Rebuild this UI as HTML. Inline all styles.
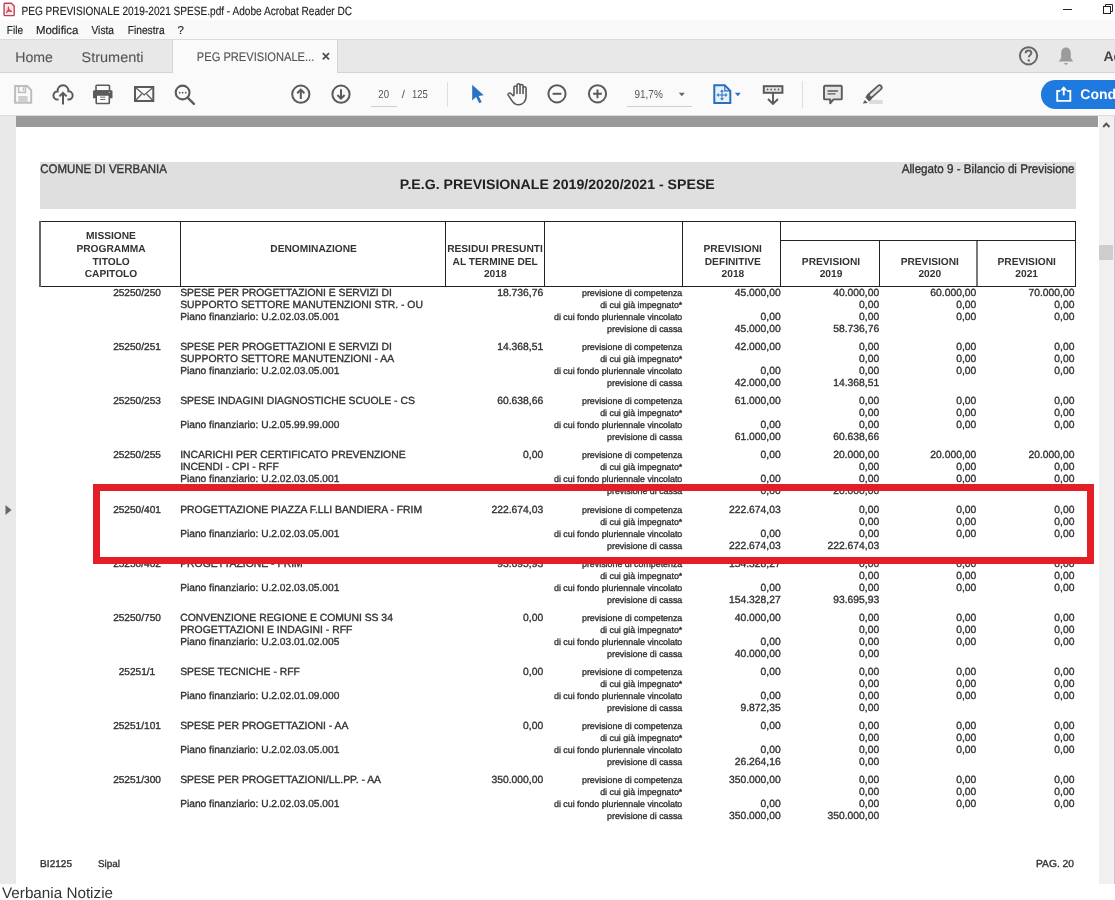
<!DOCTYPE html>
<html><head><meta charset="utf-8"><title>PEG</title>
<style>
html,body{margin:0;padding:0;}
body{width:1115px;height:900px;overflow:hidden;position:relative;background:#fff;font-family:"Liberation Sans",sans-serif;}
text{white-space:pre;}
svg.txt{will-change:transform;}
.r{position:absolute;}
</style></head><body>
<div class="r" style="left:0px;top:0px;width:1115px;height:20px;background:#ffffff;"></div>
<div class="r" style="left:0px;top:20px;width:1115px;height:19px;background:#f9f9f9;"></div>
<div class="r" style="left:0px;top:39px;width:1115px;height:1px;background:#dcdcdc;"></div>
<div class="r" style="left:0px;top:40px;width:1115px;height:32.5px;background:#e8e8e8;"></div>
<div class="r" style="left:0px;top:72px;width:1115px;height:1px;background:#d4d4d4;"></div>
<div class="r" style="left:171.5px;top:39.5px;width:166.5px;height:33.5px;background:#fafafa;border-left:1px solid #d6d6d6;border-right:1px solid #d6d6d6;box-sizing:border-box;"></div>
<div class="r" style="left:0px;top:73px;width:1115px;height:42.5px;background:#fafafa;"></div>
<div class="r" style="left:0px;top:115px;width:1115px;height:1px;background:#dcdcdc;"></div>
<svg class="r" style="left:0px;top:0px" width="20" height="20" viewBox="0 0 20 20"><path d="M4.9 3.2h6.4l2.9 2.9v8.7a0.8 0.8 0 0 1-0.8 0.8H4.9a0.8 0.8 0 0 1-0.8-0.8V4a0.8 0.8 0 0 1 0.8-0.8z" fill="#fde8e8" stroke="#b8445a" stroke-width="1.4"/><path d="M8.3 6.6c0.6 2.4-0.4 4.8-1.9 6.6M6.5 11.4c1.9-0.4 3.9-0.5 5.6 0.2M8.3 8.5c0.8 1.3 1.8 2.4 3.4 3" fill="none" stroke="#dd3c4c" stroke-width="1.1"/></svg>
<div class="r" style="left:1063px;top:9px;width:9px;height:1px;background:#222;"></div>
<svg class="r" style="left:1103px;top:4px" width="11" height="11" viewBox="0 0 11 11"><rect x="0.5" y="2.5" width="7" height="7" fill="none" stroke="#222" stroke-width="1"/><path d="M2.5 2.5V0.5h7v7h-2" fill="none" stroke="#222" stroke-width="1"/></svg>
<svg class="r" style="left:321px;top:52px" width="10" height="9" viewBox="0 0 10 9"><path d="M1.8 1.2L8 7.4M8 1.2L1.8 7.4" stroke="#4a4a4a" stroke-width="1.7"/></svg>
<svg class="r" style="left:1017px;top:45px" width="23" height="22" viewBox="0 0 23 22"><circle cx="11.5" cy="10.8" r="8.6" fill="none" stroke="#666" stroke-width="2"/><path d="M8.6 8.3c0-1.8 1.3-2.8 2.9-2.8s2.9 1 2.9 2.6c0 1.9-2.6 2.1-2.6 4.2" fill="none" stroke="#666" stroke-width="1.9"/><circle cx="11.8" cy="15.4" r="1.2" fill="#666"/></svg>
<svg class="r" style="left:1057px;top:46px" width="18" height="20" viewBox="0 0 18 20"><path d="M9 1.5c-3.3 0-4.8 2.6-4.8 5.8v4.7L1.8 15.5h14.4L13.8 12V7.3c0-3.2-1.5-5.8-4.8-5.8z" fill="#9b9b9b"/><path d="M7.2 17a1.8 1.8 0 0 0 3.6 0z" fill="#9b9b9b"/></svg>
<svg class="r" style="left:13px;top:84px" width="21" height="21" viewBox="0 0 21 21"><path d="M2.1 2.1h12l4.1 4.1v12.6H2.1z" fill="none" stroke="#bdbdbd" stroke-width="2"/><rect x="5.6" y="2.1" width="6.8" height="6.3" fill="none" stroke="#bdbdbd" stroke-width="1.6"/><rect x="9.6" y="3.5" width="1.4" height="3" fill="#bdbdbd"/><rect x="5.2" y="12" width="9.4" height="6.3" fill="#cfcfcf"/></svg>
<svg class="r" style="left:52px;top:84px" width="23" height="22" viewBox="0 0 23 22"><path d="M6.6 15.6H5.5A4.1 4.1 0 0 1 5.6 7.4A5.43 5.43 0 1 1 16.4 7.3A4.15 4.15 0 0 1 16.6 15.6H15.4" fill="none" stroke="#5a5a5a" stroke-width="2"/><path d="M11 20.5V8.8M7.4 12.4L11 8.8 14.6 12.4" fill="none" stroke="#5a5a5a" stroke-width="2"/></svg>
<svg class="r" style="left:92px;top:84px" width="22" height="21" viewBox="0 0 22 21"><rect x="4" y="1.2" width="13.5" height="5.8" rx="0.8" fill="none" stroke="#5a5a5a" stroke-width="1.6"/><path d="M2.2 6.2h17.1a1.2 1.2 0 0 1 1.2 1.2v6.9h-19.5V7.4a1.2 1.2 0 0 1 1.2-1.2z" fill="#5a5a5a"/><rect x="4.2" y="10.9" width="13.1" height="8.6" rx="0.8" fill="#fff" stroke="#5a5a5a" stroke-width="1.6"/><path d="M8.2 13.2h5.2M8.2 15.5h5.2" stroke="#5a5a5a" stroke-width="0.9"/><circle cx="17.3" cy="8.4" r="0.6" fill="#ccc"/></svg>
<svg class="r" style="left:133px;top:85px" width="22" height="18" viewBox="0 0 22 18"><rect x="2" y="2" width="18.3" height="14" fill="none" stroke="#5a5a5a" stroke-width="2"/><path d="M2.5 2.5l8.7 7.5 8.7-7.5M2.5 15.5l6.2-6.5M19.8 15.5l-6.2-6.5" fill="none" stroke="#5a5a5a" stroke-width="1.2"/></svg>
<svg class="r" style="left:173px;top:83px" width="24" height="24" viewBox="0 0 24 24"><circle cx="9.6" cy="9.5" r="6.9" fill="none" stroke="#5a5a5a" stroke-width="2.1"/><path d="M14.6 14.6l6.3 6.3" stroke="#5a5a5a" stroke-width="2.3" stroke-linecap="round"/><circle cx="6.6" cy="9.7" r="0.9" fill="#5a5a5a"/><circle cx="9.6" cy="9.7" r="0.9" fill="#5a5a5a"/><circle cx="12.7" cy="9.7" r="0.9" fill="#5a5a5a"/></svg>
<svg class="r" style="left:290px;top:83px" width="22" height="22" viewBox="0 0 22 22"><circle cx="10.8" cy="11.2" r="8.6" fill="none" stroke="#5a5a5a" stroke-width="2"/><path d="M10.8 16V6.8M7.2 10.2l3.6-3.6 3.6 3.6" fill="none" stroke="#5a5a5a" stroke-width="2"/></svg>
<svg class="r" style="left:330px;top:83px" width="22" height="22" viewBox="0 0 22 22"><circle cx="11" cy="11.2" r="8.6" fill="none" stroke="#5a5a5a" stroke-width="2"/><path d="M11 6.2v9.2M7.4 12l3.6 3.6 3.6-3.6" fill="none" stroke="#5a5a5a" stroke-width="2"/></svg>
<div class="r" style="left:370.5px;top:106px;width:26px;height:1px;background:#cfcfcf;"></div>
<div class="r" style="left:446.5px;top:81.5px;width:1px;height:25.5px;background:#dedede;"></div>
<svg class="r" style="left:470px;top:83px" width="16" height="22" viewBox="0 0 16 22"><path d="M2.2 1.8v15.8l3.9-3.6 3.2 6.3 2.4-1.2-3.1-6.2 5.1-0.6z" fill="#2b72c3"/></svg>
<svg class="r" style="left:505px;top:82px" width="24" height="25" viewBox="0 0 24 25"><g transform="translate(1.2 0) scale(1.08 1)"><path d="M7.2 13.5V5.3a1.4 1.4 0 0 1 2.8 0V12M10 12V3.2a1.4 1.4 0 0 1 2.8 0V12M12.8 12V3.8a1.4 1.4 0 0 1 2.8 0V12M15.6 12V6.2a1.4 1.4 0 0 1 2.8 0v8.3c0 4.6-2.8 8.3-6.9 8.3-3 0-4.7-1.7-6.4-4.5l-3.2-5.2a1.5 1.5 0 0 1 2.4-1.7l2.7 2.8" fill="none" stroke="#5a5a5a" stroke-width="1.5" stroke-linejoin="round"/></g></svg>
<svg class="r" style="left:546px;top:83px" width="22" height="22" viewBox="0 0 22 22"><circle cx="11" cy="10.8" r="8.6" fill="none" stroke="#5a5a5a" stroke-width="2"/><path d="M6.6 10.8h8.8" stroke="#5a5a5a" stroke-width="2"/></svg>
<svg class="r" style="left:586px;top:83px" width="22" height="22" viewBox="0 0 22 22"><circle cx="11.5" cy="10.8" r="8.6" fill="none" stroke="#5a5a5a" stroke-width="2"/><path d="M7.1 10.8h8.8M11.5 6.4v8.8" stroke="#5a5a5a" stroke-width="2"/></svg>
<svg class="r" style="left:678px;top:92px" width="8" height="5" viewBox="0 0 8 5"><path d="M0.8 0.8h6l-3 3.5z" fill="#666"/></svg>
<div class="r" style="left:626.5px;top:105.5px;width:65.5px;height:1px;background:#cfcfcf;"></div>
<svg class="r" style="left:712px;top:83px" width="21" height="22" viewBox="0 0 21 22"><path d="M2.3 2.3h10.5l5.5 5.5v12.2H2.3z" fill="#e4f1fd" stroke="#2b6fb8" stroke-width="2"/><path d="M12.8 2.3v5.5h5.5" fill="none" stroke="#2b6fb8" stroke-width="1.2"/><path d="M10 6.5l-2 2.2h4zM10 17.5l-2-2.2h4zM4.5 12l2.2-2v4zM15.5 12l-2.2-2v4z" fill="#2b6fb8"/><path d="M10 8.5v7M6.5 12h7" stroke="#2b6fb8" stroke-width="1"/></svg>
<svg class="r" style="left:734px;top:92px" width="8" height="5" viewBox="0 0 8 5"><path d="M0.8 0.8h6l-3 3.5z" fill="#2b72c3"/></svg>
<svg class="r" style="left:762px;top:84px" width="22" height="22" viewBox="0 0 22 22"><rect x="1.8" y="2.2" width="18.6" height="6.6" fill="#e6e6e6" stroke="#5a5a5a" stroke-width="2"/><circle cx="5.6" cy="5.5" r="0.9" fill="#5a5a5a"/><circle cx="9.2" cy="5.5" r="0.9" fill="#5a5a5a"/><circle cx="12.9" cy="5.5" r="0.9" fill="#5a5a5a"/><circle cx="16.5" cy="5.5" r="0.9" fill="#5a5a5a"/><path d="M11 9v11M6 15l5 5 5-5" fill="none" stroke="#5a5a5a" stroke-width="1.9"/></svg>
<div class="r" style="left:802px;top:81px;width:1px;height:26.5px;background:#dedede;"></div>
<svg class="r" style="left:822px;top:84px" width="22" height="22" viewBox="0 0 22 22"><path d="M3 1.8h15.8a1 1 0 0 1 1 1v11.6a1 1 0 0 1-1 1H11.5l-3.3 3.9v-3.9H3a1 1 0 0 1-1-1V2.8a1 1 0 0 1 1-1z" fill="#e4e4e4" stroke="#5a5a5a" stroke-width="1.9" stroke-linejoin="round"/><path d="M5.5 7h10.5M5.5 9.8h8" stroke="#5a5a5a" stroke-width="1.3"/></svg>
<svg class="r" style="left:860px;top:83px" width="26" height="24" viewBox="0 0 26 24"><rect x="9.3" y="17" width="13.4" height="4" fill="#dcdcdc"/><path d="M9.6 13.4L19.5 4.5" stroke="#5a5a5a" stroke-width="6.2" stroke-linecap="round"/><path d="M11.3 12L19.4 4.6" stroke="#e2e2e2" stroke-width="2.8" stroke-linecap="round"/><path d="M7.2 16.4L10.2 13.6" stroke="#5a5a5a" stroke-width="5.6"/><path d="M2.8 20.5L4.9 17.1 7.7 19.9z" fill="#5a5a5a"/></svg>
<div class="r" style="left:1041px;top:80px;width:120px;height:28.7px;background:#1f7ae0;border-radius:14.35px;"></div>
<svg class="r" style="left:1055px;top:85px" width="18" height="18" viewBox="0 0 18 18"><path d="M5.2 6H2.2V15.9H15.3V6H12.2" fill="none" stroke="#fff" stroke-width="1.9"/><path d="M8.75 5V10.4" stroke="#fff" stroke-width="1.9"/><path d="M5.1 5.6L8.75 1.2 12.4 5.6z" fill="#fff"/></svg>
<div class="r" style="left:0px;top:116px;width:16px;height:767.5px;background:#e9e9e9;"></div>
<div class="r" style="left:16px;top:116px;width:1083px;height:767.5px;background:#ffffff;"></div>
<div class="r" style="left:16px;top:116px;width:1082px;height:11px;background:#9a9a9a;"></div>
<svg class="r" style="left:4px;top:504px" width="9" height="12" viewBox="0 0 9 12"><path d="M1.5 1v10l6-5z" fill="#666"/></svg>
<div class="r" style="left:1099px;top:116px;width:15px;height:767.5px;background:#f0f0f0;"></div>
<div class="r" style="left:1114px;top:116px;width:1px;height:767.5px;background:#c9c9c9;"></div>
<div class="r" style="left:1099px;top:245px;width:14px;height:15px;background:#cdcdcd;"></div>
<svg class="r" style="left:1100px;top:119px" width="13" height="11" viewBox="0 0 13 11"><path d="M3.2 8L6.3 4.6 9.4 8" fill="none" stroke="#505050" stroke-width="1.9"/></svg>
<div class="r" style="left:39.5px;top:162px;width:1036.5px;height:46.5px;background:#dfdfdf;"></div>
<div class="r" style="left:39px;top:221px;width:1037px;height:1px;background:#222;"></div>
<div class="r" style="left:39px;top:286px;width:1037px;height:1px;background:#222;"></div>
<div class="r" style="left:39px;top:221px;width:2px;height:66px;background:#666;"></div>
<div class="r" style="left:180px;top:221px;width:1px;height:66px;background:#222;"></div>
<div class="r" style="left:445px;top:221px;width:1px;height:66px;background:#222;"></div>
<div class="r" style="left:544px;top:221px;width:1px;height:66px;background:#222;"></div>
<div class="r" style="left:682px;top:221px;width:1px;height:66px;background:#222;"></div>
<div class="r" style="left:780px;top:221px;width:1px;height:66px;background:#222;"></div>
<div class="r" style="left:1075px;top:221px;width:1px;height:66px;background:#222;"></div>
<div class="r" style="left:879px;top:240px;width:1px;height:46px;background:#222;"></div>
<div class="r" style="left:976px;top:240px;width:2px;height:46px;background:#7a7a7a;"></div>
<div class="r" style="left:780px;top:240px;width:295px;height:1px;background:#222;"></div>
<svg class="r txt" style="left:0;top:0" width="1115" height="900" font-family="Liberation Sans" text-rendering="geometricPrecision"><text x="21.50" y="15.20" font-size="12" fill="#1e1e1e" textLength="330.5" lengthAdjust="spacingAndGlyphs" stroke="#1e1e1e" stroke-width="0.15">PEG PREVISIONALE 2019-2021 SPESE.pdf - Adobe Acrobat Reader DC</text><text x="6.80" y="34.00" font-size="11.5" fill="#222" textLength="16.2" lengthAdjust="spacingAndGlyphs" stroke="#222" stroke-width="0.15">File</text><text x="35.90" y="34.00" font-size="11.5" fill="#222" textLength="42.5" lengthAdjust="spacingAndGlyphs" stroke="#222" stroke-width="0.15">Modifica</text><text x="91.50" y="34.00" font-size="11.5" fill="#222" textLength="22.5" lengthAdjust="spacingAndGlyphs" stroke="#222" stroke-width="0.15">Vista</text><text x="127.70" y="34.00" font-size="11.5" fill="#222" textLength="37" lengthAdjust="spacingAndGlyphs" stroke="#222" stroke-width="0.15">Finestra</text><text x="177.60" y="34.00" font-size="11.5" fill="#222" stroke="#222" stroke-width="0.15">?</text><text x="15.20" y="61.70" font-size="14.1" fill="#555" textLength="37.7" lengthAdjust="spacingAndGlyphs" stroke="#555" stroke-width="0.1">Home</text><text x="81.60" y="61.70" font-size="14.1" fill="#555" textLength="61.9" lengthAdjust="spacingAndGlyphs" stroke="#555" stroke-width="0.1">Strumenti</text><text x="196.80" y="61.00" font-size="12.5" fill="#505050" textLength="117.5" lengthAdjust="spacingAndGlyphs" stroke="#505050" stroke-width="0.1">PEG PREVISIONALE...</text><text x="1103.50" y="61.40" font-size="14" fill="#444" font-weight="bold">Ac</text><text x="378.30" y="98.20" font-size="11.5" fill="#555" textLength="10.7" lengthAdjust="spacingAndGlyphs">20</text><text x="401.80" y="98.20" font-size="11.5" fill="#555">/</text><text x="412.00" y="98.20" font-size="11.5" fill="#555" textLength="15.8" lengthAdjust="spacingAndGlyphs">125</text><text x="634.50" y="97.80" font-size="11.5" fill="#555" textLength="28.3" lengthAdjust="spacingAndGlyphs">91,7%</text><text x="1080.30" y="98.80" font-size="14" fill="#fff" font-weight="bold">Cond</text><text x="40.20" y="173.20" font-size="12.5" fill="#333" textLength="126.7" lengthAdjust="spacingAndGlyphs" stroke="#333" stroke-width="0.35">COMUNE DI VERBANIA</text><text x="1074.60" y="173.20" font-size="12.6" fill="#333" text-anchor="end" textLength="172.9" lengthAdjust="spacingAndGlyphs" stroke="#333" stroke-width="0.35">Allegato 9 - Bilancio di Previsione</text><text x="399.80" y="188.80" font-size="13.7" fill="#222" font-weight="bold" textLength="315" lengthAdjust="spacingAndGlyphs" stroke="#222" stroke-width="0.01">P.E.G. PREVISIONALE 2019/2020/2021 - SPESE</text><text x="111.00" y="238.60" font-size="10.2" fill="#333" text-anchor="middle" font-weight="bold">MISSIONE</text><text x="111.00" y="251.60" font-size="10.2" fill="#333" text-anchor="middle" font-weight="bold">PROGRAMMA</text><text x="111.20" y="264.50" font-size="10.2" fill="#333" text-anchor="middle" font-weight="bold">TITOLO</text><text x="111.00" y="276.70" font-size="10.2" fill="#333" text-anchor="middle" font-weight="bold">CAPITOLO</text><text x="313.60" y="252.00" font-size="10.2" fill="#333" text-anchor="middle" font-weight="bold">DENOMINAZIONE</text><text x="495.00" y="252.20" font-size="10.2" fill="#333" text-anchor="middle" font-weight="bold">RESIDUI PRESUNTI</text><text x="495.20" y="264.80" font-size="10.2" fill="#333" text-anchor="middle" font-weight="bold">AL TERMINE DEL</text><text x="495.30" y="277.40" font-size="10.2" fill="#333" text-anchor="middle" font-weight="bold">2018</text><text x="732.70" y="252.20" font-size="10.2" fill="#333" text-anchor="middle" font-weight="bold">PREVISIONI</text><text x="732.80" y="264.80" font-size="10.2" fill="#333" text-anchor="middle" font-weight="bold">DEFINITIVE</text><text x="732.90" y="277.40" font-size="10.2" fill="#333" text-anchor="middle" font-weight="bold">2018</text><text x="831.00" y="265.20" font-size="10.2" fill="#333" text-anchor="middle" font-weight="bold">PREVISIONI</text><text x="831.00" y="277.30" font-size="10.2" fill="#333" text-anchor="middle" font-weight="bold">2019</text><text x="929.80" y="265.20" font-size="10.2" fill="#333" text-anchor="middle" font-weight="bold">PREVISIONI</text><text x="929.80" y="277.30" font-size="10.2" fill="#333" text-anchor="middle" font-weight="bold">2020</text><text x="1026.70" y="265.20" font-size="10.2" fill="#333" text-anchor="middle" font-weight="bold">PREVISIONI</text><text x="1026.70" y="277.30" font-size="10.2" fill="#333" text-anchor="middle" font-weight="bold">2021</text><text x="137.00" y="296.00" font-size="10.1" fill="#333" text-anchor="middle" stroke="#333" stroke-width="0.35">25250/250</text><text x="180.20" y="296.00" font-size="10.38" fill="#333" stroke="#333" stroke-width="0.35">SPESE PER PROGETTAZIONI E SERVIZI DI</text><text x="180.20" y="308.00" font-size="10.38" fill="#333" stroke="#333" stroke-width="0.35">SUPPORTO SETTORE MANUTENZIONI STR. - OU</text><text x="180.20" y="320.00" font-size="10.2" fill="#333" stroke="#333" stroke-width="0.35">Piano finanziario: U.2.02.03.05.001</text><text x="543.20" y="296.00" font-size="10.34" fill="#333" text-anchor="end" stroke="#333" stroke-width="0.35">18.736,76</text><text x="682.30" y="296.00" font-size="8.85" fill="#333" text-anchor="end" stroke="#333" stroke-width="0.35">previsione di competenza</text><text x="682.30" y="308.00" font-size="8.85" fill="#333" text-anchor="end" stroke="#333" stroke-width="0.35">di cui gi&#224; impegnato*</text><text x="682.30" y="320.00" font-size="8.85" fill="#333" text-anchor="end" stroke="#333" stroke-width="0.35">di cui fondo pluriennale vincolato</text><text x="682.30" y="332.00" font-size="8.85" fill="#333" text-anchor="end" stroke="#333" stroke-width="0.35">previsione di cassa</text><text x="780.70" y="296.00" font-size="10.34" fill="#333" text-anchor="end" stroke="#333" stroke-width="0.35">45.000,00</text><text x="780.70" y="320.00" font-size="10.34" fill="#333" text-anchor="end" stroke="#333" stroke-width="0.35">0,00</text><text x="780.70" y="332.00" font-size="10.34" fill="#333" text-anchor="end" stroke="#333" stroke-width="0.35">45.000,00</text><text x="879.20" y="296.00" font-size="10.34" fill="#333" text-anchor="end" stroke="#333" stroke-width="0.35">40.000,00</text><text x="879.20" y="308.00" font-size="10.34" fill="#333" text-anchor="end" stroke="#333" stroke-width="0.35">0,00</text><text x="879.20" y="320.00" font-size="10.34" fill="#333" text-anchor="end" stroke="#333" stroke-width="0.35">0,00</text><text x="879.20" y="332.00" font-size="10.34" fill="#333" text-anchor="end" stroke="#333" stroke-width="0.35">58.736,76</text><text x="976.30" y="296.00" font-size="10.34" fill="#333" text-anchor="end" stroke="#333" stroke-width="0.35">60.000,00</text><text x="976.30" y="308.00" font-size="10.34" fill="#333" text-anchor="end" stroke="#333" stroke-width="0.35">0,00</text><text x="976.30" y="320.00" font-size="10.34" fill="#333" text-anchor="end" stroke="#333" stroke-width="0.35">0,00</text><text x="1074.40" y="296.00" font-size="10.34" fill="#333" text-anchor="end" stroke="#333" stroke-width="0.35">70.000,00</text><text x="1074.40" y="308.00" font-size="10.34" fill="#333" text-anchor="end" stroke="#333" stroke-width="0.35">0,00</text><text x="1074.40" y="320.00" font-size="10.34" fill="#333" text-anchor="end" stroke="#333" stroke-width="0.35">0,00</text><text x="137.00" y="350.14" font-size="10.1" fill="#333" text-anchor="middle" stroke="#333" stroke-width="0.35">25250/251</text><text x="180.20" y="350.14" font-size="10.38" fill="#333" stroke="#333" stroke-width="0.35">SPESE PER PROGETTAZIONI E SERVIZI DI</text><text x="180.20" y="362.14" font-size="10.38" fill="#333" stroke="#333" stroke-width="0.35">SUPPORTO SETTORE MANUTENZIONI - AA</text><text x="180.20" y="374.14" font-size="10.2" fill="#333" stroke="#333" stroke-width="0.35">Piano finanziario: U.2.02.03.05.001</text><text x="543.20" y="350.14" font-size="10.34" fill="#333" text-anchor="end" stroke="#333" stroke-width="0.35">14.368,51</text><text x="682.30" y="350.14" font-size="8.85" fill="#333" text-anchor="end" stroke="#333" stroke-width="0.35">previsione di competenza</text><text x="682.30" y="362.14" font-size="8.85" fill="#333" text-anchor="end" stroke="#333" stroke-width="0.35">di cui gi&#224; impegnato*</text><text x="682.30" y="374.14" font-size="8.85" fill="#333" text-anchor="end" stroke="#333" stroke-width="0.35">di cui fondo pluriennale vincolato</text><text x="682.30" y="386.14" font-size="8.85" fill="#333" text-anchor="end" stroke="#333" stroke-width="0.35">previsione di cassa</text><text x="780.70" y="350.14" font-size="10.34" fill="#333" text-anchor="end" stroke="#333" stroke-width="0.35">42.000,00</text><text x="780.70" y="374.14" font-size="10.34" fill="#333" text-anchor="end" stroke="#333" stroke-width="0.35">0,00</text><text x="780.70" y="386.14" font-size="10.34" fill="#333" text-anchor="end" stroke="#333" stroke-width="0.35">42.000,00</text><text x="879.20" y="350.14" font-size="10.34" fill="#333" text-anchor="end" stroke="#333" stroke-width="0.35">0,00</text><text x="879.20" y="362.14" font-size="10.34" fill="#333" text-anchor="end" stroke="#333" stroke-width="0.35">0,00</text><text x="879.20" y="374.14" font-size="10.34" fill="#333" text-anchor="end" stroke="#333" stroke-width="0.35">0,00</text><text x="879.20" y="386.14" font-size="10.34" fill="#333" text-anchor="end" stroke="#333" stroke-width="0.35">14.368,51</text><text x="976.30" y="350.14" font-size="10.34" fill="#333" text-anchor="end" stroke="#333" stroke-width="0.35">0,00</text><text x="976.30" y="362.14" font-size="10.34" fill="#333" text-anchor="end" stroke="#333" stroke-width="0.35">0,00</text><text x="976.30" y="374.14" font-size="10.34" fill="#333" text-anchor="end" stroke="#333" stroke-width="0.35">0,00</text><text x="1074.40" y="350.14" font-size="10.34" fill="#333" text-anchor="end" stroke="#333" stroke-width="0.35">0,00</text><text x="1074.40" y="362.14" font-size="10.34" fill="#333" text-anchor="end" stroke="#333" stroke-width="0.35">0,00</text><text x="1074.40" y="374.14" font-size="10.34" fill="#333" text-anchor="end" stroke="#333" stroke-width="0.35">0,00</text><text x="137.00" y="404.28" font-size="10.1" fill="#333" text-anchor="middle" stroke="#333" stroke-width="0.35">25250/253</text><text x="180.20" y="404.28" font-size="10.38" fill="#333" stroke="#333" stroke-width="0.35">SPESE INDAGINI DIAGNOSTICHE SCUOLE - CS</text><text x="180.20" y="428.28" font-size="10.2" fill="#333" stroke="#333" stroke-width="0.35">Piano finanziario: U.2.05.99.99.000</text><text x="543.20" y="404.28" font-size="10.34" fill="#333" text-anchor="end" stroke="#333" stroke-width="0.35">60.638,66</text><text x="682.30" y="404.28" font-size="8.85" fill="#333" text-anchor="end" stroke="#333" stroke-width="0.35">previsione di competenza</text><text x="682.30" y="416.28" font-size="8.85" fill="#333" text-anchor="end" stroke="#333" stroke-width="0.35">di cui gi&#224; impegnato*</text><text x="682.30" y="428.28" font-size="8.85" fill="#333" text-anchor="end" stroke="#333" stroke-width="0.35">di cui fondo pluriennale vincolato</text><text x="682.30" y="440.28" font-size="8.85" fill="#333" text-anchor="end" stroke="#333" stroke-width="0.35">previsione di cassa</text><text x="780.70" y="404.28" font-size="10.34" fill="#333" text-anchor="end" stroke="#333" stroke-width="0.35">61.000,00</text><text x="780.70" y="428.28" font-size="10.34" fill="#333" text-anchor="end" stroke="#333" stroke-width="0.35">0,00</text><text x="780.70" y="440.28" font-size="10.34" fill="#333" text-anchor="end" stroke="#333" stroke-width="0.35">61.000,00</text><text x="879.20" y="404.28" font-size="10.34" fill="#333" text-anchor="end" stroke="#333" stroke-width="0.35">0,00</text><text x="879.20" y="416.28" font-size="10.34" fill="#333" text-anchor="end" stroke="#333" stroke-width="0.35">0,00</text><text x="879.20" y="428.28" font-size="10.34" fill="#333" text-anchor="end" stroke="#333" stroke-width="0.35">0,00</text><text x="879.20" y="440.28" font-size="10.34" fill="#333" text-anchor="end" stroke="#333" stroke-width="0.35">60.638,66</text><text x="976.30" y="404.28" font-size="10.34" fill="#333" text-anchor="end" stroke="#333" stroke-width="0.35">0,00</text><text x="976.30" y="416.28" font-size="10.34" fill="#333" text-anchor="end" stroke="#333" stroke-width="0.35">0,00</text><text x="976.30" y="428.28" font-size="10.34" fill="#333" text-anchor="end" stroke="#333" stroke-width="0.35">0,00</text><text x="1074.40" y="404.28" font-size="10.34" fill="#333" text-anchor="end" stroke="#333" stroke-width="0.35">0,00</text><text x="1074.40" y="416.28" font-size="10.34" fill="#333" text-anchor="end" stroke="#333" stroke-width="0.35">0,00</text><text x="1074.40" y="428.28" font-size="10.34" fill="#333" text-anchor="end" stroke="#333" stroke-width="0.35">0,00</text><text x="137.00" y="458.42" font-size="10.1" fill="#333" text-anchor="middle" stroke="#333" stroke-width="0.35">25250/255</text><text x="180.20" y="458.42" font-size="10.38" fill="#333" stroke="#333" stroke-width="0.35">INCARICHI PER CERTIFICATO PREVENZIONE</text><text x="180.20" y="470.42" font-size="10.38" fill="#333" stroke="#333" stroke-width="0.35">INCENDI - CPI - RFF</text><text x="180.20" y="482.42" font-size="10.2" fill="#333" stroke="#333" stroke-width="0.35">Piano finanziario: U.2.02.03.05.001</text><text x="543.20" y="458.42" font-size="10.34" fill="#333" text-anchor="end" stroke="#333" stroke-width="0.35">0,00</text><text x="682.30" y="458.42" font-size="8.85" fill="#333" text-anchor="end" stroke="#333" stroke-width="0.35">previsione di competenza</text><text x="682.30" y="470.42" font-size="8.85" fill="#333" text-anchor="end" stroke="#333" stroke-width="0.35">di cui gi&#224; impegnato*</text><text x="682.30" y="482.42" font-size="8.85" fill="#333" text-anchor="end" stroke="#333" stroke-width="0.35">di cui fondo pluriennale vincolato</text><text x="682.30" y="494.42" font-size="8.85" fill="#333" text-anchor="end" stroke="#333" stroke-width="0.35">previsione di cassa</text><text x="780.70" y="458.42" font-size="10.34" fill="#333" text-anchor="end" stroke="#333" stroke-width="0.35">0,00</text><text x="780.70" y="482.42" font-size="10.34" fill="#333" text-anchor="end" stroke="#333" stroke-width="0.35">0,00</text><text x="780.70" y="494.42" font-size="10.34" fill="#333" text-anchor="end" stroke="#333" stroke-width="0.35">0,00</text><text x="879.20" y="458.42" font-size="10.34" fill="#333" text-anchor="end" stroke="#333" stroke-width="0.35">20.000,00</text><text x="879.20" y="470.42" font-size="10.34" fill="#333" text-anchor="end" stroke="#333" stroke-width="0.35">0,00</text><text x="879.20" y="482.42" font-size="10.34" fill="#333" text-anchor="end" stroke="#333" stroke-width="0.35">0,00</text><text x="879.20" y="494.42" font-size="10.34" fill="#333" text-anchor="end" stroke="#333" stroke-width="0.35">20.000,00</text><text x="976.30" y="458.42" font-size="10.34" fill="#333" text-anchor="end" stroke="#333" stroke-width="0.35">20.000,00</text><text x="976.30" y="470.42" font-size="10.34" fill="#333" text-anchor="end" stroke="#333" stroke-width="0.35">0,00</text><text x="976.30" y="482.42" font-size="10.34" fill="#333" text-anchor="end" stroke="#333" stroke-width="0.35">0,00</text><text x="1074.40" y="458.42" font-size="10.34" fill="#333" text-anchor="end" stroke="#333" stroke-width="0.35">20.000,00</text><text x="1074.40" y="470.42" font-size="10.34" fill="#333" text-anchor="end" stroke="#333" stroke-width="0.35">0,00</text><text x="1074.40" y="482.42" font-size="10.34" fill="#333" text-anchor="end" stroke="#333" stroke-width="0.35">0,00</text><text x="137.00" y="512.56" font-size="10.1" fill="#333" text-anchor="middle" stroke="#333" stroke-width="0.35">25250/401</text><text x="180.20" y="512.56" font-size="10.38" fill="#333" stroke="#333" stroke-width="0.35">PROGETTAZIONE PIAZZA F.LLI BANDIERA - FRIM</text><text x="180.20" y="536.56" font-size="10.2" fill="#333" stroke="#333" stroke-width="0.35">Piano finanziario: U.2.02.03.05.001</text><text x="543.20" y="512.56" font-size="10.34" fill="#333" text-anchor="end" stroke="#333" stroke-width="0.35">222.674,03</text><text x="682.30" y="512.56" font-size="8.85" fill="#333" text-anchor="end" stroke="#333" stroke-width="0.35">previsione di competenza</text><text x="682.30" y="524.56" font-size="8.85" fill="#333" text-anchor="end" stroke="#333" stroke-width="0.35">di cui gi&#224; impegnato*</text><text x="682.30" y="536.56" font-size="8.85" fill="#333" text-anchor="end" stroke="#333" stroke-width="0.35">di cui fondo pluriennale vincolato</text><text x="682.30" y="548.56" font-size="8.85" fill="#333" text-anchor="end" stroke="#333" stroke-width="0.35">previsione di cassa</text><text x="780.70" y="512.56" font-size="10.34" fill="#333" text-anchor="end" stroke="#333" stroke-width="0.35">222.674,03</text><text x="780.70" y="536.56" font-size="10.34" fill="#333" text-anchor="end" stroke="#333" stroke-width="0.35">0,00</text><text x="780.70" y="548.56" font-size="10.34" fill="#333" text-anchor="end" stroke="#333" stroke-width="0.35">222.674,03</text><text x="879.20" y="512.56" font-size="10.34" fill="#333" text-anchor="end" stroke="#333" stroke-width="0.35">0,00</text><text x="879.20" y="524.56" font-size="10.34" fill="#333" text-anchor="end" stroke="#333" stroke-width="0.35">0,00</text><text x="879.20" y="536.56" font-size="10.34" fill="#333" text-anchor="end" stroke="#333" stroke-width="0.35">0,00</text><text x="879.20" y="548.56" font-size="10.34" fill="#333" text-anchor="end" stroke="#333" stroke-width="0.35">222.674,03</text><text x="976.30" y="512.56" font-size="10.34" fill="#333" text-anchor="end" stroke="#333" stroke-width="0.35">0,00</text><text x="976.30" y="524.56" font-size="10.34" fill="#333" text-anchor="end" stroke="#333" stroke-width="0.35">0,00</text><text x="976.30" y="536.56" font-size="10.34" fill="#333" text-anchor="end" stroke="#333" stroke-width="0.35">0,00</text><text x="1074.40" y="512.56" font-size="10.34" fill="#333" text-anchor="end" stroke="#333" stroke-width="0.35">0,00</text><text x="1074.40" y="524.56" font-size="10.34" fill="#333" text-anchor="end" stroke="#333" stroke-width="0.35">0,00</text><text x="1074.40" y="536.56" font-size="10.34" fill="#333" text-anchor="end" stroke="#333" stroke-width="0.35">0,00</text><text x="137.00" y="566.70" font-size="10.1" fill="#333" text-anchor="middle" stroke="#333" stroke-width="0.35">25250/402</text><text x="180.20" y="566.70" font-size="10.38" fill="#333" stroke="#333" stroke-width="0.35">PROGETTAZIONE - FRIM</text><text x="180.20" y="590.70" font-size="10.2" fill="#333" stroke="#333" stroke-width="0.35">Piano finanziario: U.2.02.03.05.001</text><text x="543.20" y="566.70" font-size="10.34" fill="#333" text-anchor="end" stroke="#333" stroke-width="0.35">93.695,93</text><text x="682.30" y="566.70" font-size="8.85" fill="#333" text-anchor="end" stroke="#333" stroke-width="0.35">previsione di competenza</text><text x="682.30" y="578.70" font-size="8.85" fill="#333" text-anchor="end" stroke="#333" stroke-width="0.35">di cui gi&#224; impegnato*</text><text x="682.30" y="590.70" font-size="8.85" fill="#333" text-anchor="end" stroke="#333" stroke-width="0.35">di cui fondo pluriennale vincolato</text><text x="682.30" y="602.70" font-size="8.85" fill="#333" text-anchor="end" stroke="#333" stroke-width="0.35">previsione di cassa</text><text x="780.70" y="566.70" font-size="10.34" fill="#333" text-anchor="end" stroke="#333" stroke-width="0.35">154.328,27</text><text x="780.70" y="590.70" font-size="10.34" fill="#333" text-anchor="end" stroke="#333" stroke-width="0.35">0,00</text><text x="780.70" y="602.70" font-size="10.34" fill="#333" text-anchor="end" stroke="#333" stroke-width="0.35">154.328,27</text><text x="879.20" y="566.70" font-size="10.34" fill="#333" text-anchor="end" stroke="#333" stroke-width="0.35">0,00</text><text x="879.20" y="578.70" font-size="10.34" fill="#333" text-anchor="end" stroke="#333" stroke-width="0.35">0,00</text><text x="879.20" y="590.70" font-size="10.34" fill="#333" text-anchor="end" stroke="#333" stroke-width="0.35">0,00</text><text x="879.20" y="602.70" font-size="10.34" fill="#333" text-anchor="end" stroke="#333" stroke-width="0.35">93.695,93</text><text x="976.30" y="566.70" font-size="10.34" fill="#333" text-anchor="end" stroke="#333" stroke-width="0.35">0,00</text><text x="976.30" y="578.70" font-size="10.34" fill="#333" text-anchor="end" stroke="#333" stroke-width="0.35">0,00</text><text x="976.30" y="590.70" font-size="10.34" fill="#333" text-anchor="end" stroke="#333" stroke-width="0.35">0,00</text><text x="1074.40" y="566.70" font-size="10.34" fill="#333" text-anchor="end" stroke="#333" stroke-width="0.35">0,00</text><text x="1074.40" y="578.70" font-size="10.34" fill="#333" text-anchor="end" stroke="#333" stroke-width="0.35">0,00</text><text x="1074.40" y="590.70" font-size="10.34" fill="#333" text-anchor="end" stroke="#333" stroke-width="0.35">0,00</text><text x="137.00" y="620.84" font-size="10.1" fill="#333" text-anchor="middle" stroke="#333" stroke-width="0.35">25250/750</text><text x="180.20" y="620.84" font-size="10.38" fill="#333" stroke="#333" stroke-width="0.35">CONVENZIONE REGIONE E COMUNI SS 34</text><text x="180.20" y="632.84" font-size="10.38" fill="#333" stroke="#333" stroke-width="0.35">PROGETTAZIONI E INDAGINI - RFF</text><text x="180.20" y="644.84" font-size="10.2" fill="#333" stroke="#333" stroke-width="0.35">Piano finanziario: U.2.03.01.02.005</text><text x="543.20" y="620.84" font-size="10.34" fill="#333" text-anchor="end" stroke="#333" stroke-width="0.35">0,00</text><text x="682.30" y="620.84" font-size="8.85" fill="#333" text-anchor="end" stroke="#333" stroke-width="0.35">previsione di competenza</text><text x="682.30" y="632.84" font-size="8.85" fill="#333" text-anchor="end" stroke="#333" stroke-width="0.35">di cui gi&#224; impegnato*</text><text x="682.30" y="644.84" font-size="8.85" fill="#333" text-anchor="end" stroke="#333" stroke-width="0.35">di cui fondo pluriennale vincolato</text><text x="682.30" y="656.84" font-size="8.85" fill="#333" text-anchor="end" stroke="#333" stroke-width="0.35">previsione di cassa</text><text x="780.70" y="620.84" font-size="10.34" fill="#333" text-anchor="end" stroke="#333" stroke-width="0.35">40.000,00</text><text x="780.70" y="644.84" font-size="10.34" fill="#333" text-anchor="end" stroke="#333" stroke-width="0.35">0,00</text><text x="780.70" y="656.84" font-size="10.34" fill="#333" text-anchor="end" stroke="#333" stroke-width="0.35">40.000,00</text><text x="879.20" y="620.84" font-size="10.34" fill="#333" text-anchor="end" stroke="#333" stroke-width="0.35">0,00</text><text x="879.20" y="632.84" font-size="10.34" fill="#333" text-anchor="end" stroke="#333" stroke-width="0.35">0,00</text><text x="879.20" y="644.84" font-size="10.34" fill="#333" text-anchor="end" stroke="#333" stroke-width="0.35">0,00</text><text x="879.20" y="656.84" font-size="10.34" fill="#333" text-anchor="end" stroke="#333" stroke-width="0.35">0,00</text><text x="976.30" y="620.84" font-size="10.34" fill="#333" text-anchor="end" stroke="#333" stroke-width="0.35">0,00</text><text x="976.30" y="632.84" font-size="10.34" fill="#333" text-anchor="end" stroke="#333" stroke-width="0.35">0,00</text><text x="976.30" y="644.84" font-size="10.34" fill="#333" text-anchor="end" stroke="#333" stroke-width="0.35">0,00</text><text x="1074.40" y="620.84" font-size="10.34" fill="#333" text-anchor="end" stroke="#333" stroke-width="0.35">0,00</text><text x="1074.40" y="632.84" font-size="10.34" fill="#333" text-anchor="end" stroke="#333" stroke-width="0.35">0,00</text><text x="1074.40" y="644.84" font-size="10.34" fill="#333" text-anchor="end" stroke="#333" stroke-width="0.35">0,00</text><text x="137.00" y="674.98" font-size="10.1" fill="#333" text-anchor="middle" stroke="#333" stroke-width="0.35">25251/1</text><text x="180.20" y="674.98" font-size="10.38" fill="#333" stroke="#333" stroke-width="0.35">SPESE TECNICHE - RFF</text><text x="180.20" y="698.98" font-size="10.2" fill="#333" stroke="#333" stroke-width="0.35">Piano finanziario: U.2.02.01.09.000</text><text x="543.20" y="674.98" font-size="10.34" fill="#333" text-anchor="end" stroke="#333" stroke-width="0.35">0,00</text><text x="682.30" y="674.98" font-size="8.85" fill="#333" text-anchor="end" stroke="#333" stroke-width="0.35">previsione di competenza</text><text x="682.30" y="686.98" font-size="8.85" fill="#333" text-anchor="end" stroke="#333" stroke-width="0.35">di cui gi&#224; impegnato*</text><text x="682.30" y="698.98" font-size="8.85" fill="#333" text-anchor="end" stroke="#333" stroke-width="0.35">di cui fondo pluriennale vincolato</text><text x="682.30" y="710.98" font-size="8.85" fill="#333" text-anchor="end" stroke="#333" stroke-width="0.35">previsione di cassa</text><text x="780.70" y="674.98" font-size="10.34" fill="#333" text-anchor="end" stroke="#333" stroke-width="0.35">0,00</text><text x="780.70" y="698.98" font-size="10.34" fill="#333" text-anchor="end" stroke="#333" stroke-width="0.35">0,00</text><text x="780.70" y="710.98" font-size="10.34" fill="#333" text-anchor="end" stroke="#333" stroke-width="0.35">9.872,35</text><text x="879.20" y="674.98" font-size="10.34" fill="#333" text-anchor="end" stroke="#333" stroke-width="0.35">0,00</text><text x="879.20" y="686.98" font-size="10.34" fill="#333" text-anchor="end" stroke="#333" stroke-width="0.35">0,00</text><text x="879.20" y="698.98" font-size="10.34" fill="#333" text-anchor="end" stroke="#333" stroke-width="0.35">0,00</text><text x="879.20" y="710.98" font-size="10.34" fill="#333" text-anchor="end" stroke="#333" stroke-width="0.35">0,00</text><text x="976.30" y="674.98" font-size="10.34" fill="#333" text-anchor="end" stroke="#333" stroke-width="0.35">0,00</text><text x="976.30" y="686.98" font-size="10.34" fill="#333" text-anchor="end" stroke="#333" stroke-width="0.35">0,00</text><text x="976.30" y="698.98" font-size="10.34" fill="#333" text-anchor="end" stroke="#333" stroke-width="0.35">0,00</text><text x="1074.40" y="674.98" font-size="10.34" fill="#333" text-anchor="end" stroke="#333" stroke-width="0.35">0,00</text><text x="1074.40" y="686.98" font-size="10.34" fill="#333" text-anchor="end" stroke="#333" stroke-width="0.35">0,00</text><text x="1074.40" y="698.98" font-size="10.34" fill="#333" text-anchor="end" stroke="#333" stroke-width="0.35">0,00</text><text x="137.00" y="729.12" font-size="10.1" fill="#333" text-anchor="middle" stroke="#333" stroke-width="0.35">25251/101</text><text x="180.20" y="729.12" font-size="10.38" fill="#333" stroke="#333" stroke-width="0.35">SPESE PER PROGETTAZIONI - AA</text><text x="180.20" y="753.12" font-size="10.2" fill="#333" stroke="#333" stroke-width="0.35">Piano finanziario: U.2.02.03.05.001</text><text x="543.20" y="729.12" font-size="10.34" fill="#333" text-anchor="end" stroke="#333" stroke-width="0.35">0,00</text><text x="682.30" y="729.12" font-size="8.85" fill="#333" text-anchor="end" stroke="#333" stroke-width="0.35">previsione di competenza</text><text x="682.30" y="741.12" font-size="8.85" fill="#333" text-anchor="end" stroke="#333" stroke-width="0.35">di cui gi&#224; impegnato*</text><text x="682.30" y="753.12" font-size="8.85" fill="#333" text-anchor="end" stroke="#333" stroke-width="0.35">di cui fondo pluriennale vincolato</text><text x="682.30" y="765.12" font-size="8.85" fill="#333" text-anchor="end" stroke="#333" stroke-width="0.35">previsione di cassa</text><text x="780.70" y="729.12" font-size="10.34" fill="#333" text-anchor="end" stroke="#333" stroke-width="0.35">0,00</text><text x="780.70" y="753.12" font-size="10.34" fill="#333" text-anchor="end" stroke="#333" stroke-width="0.35">0,00</text><text x="780.70" y="765.12" font-size="10.34" fill="#333" text-anchor="end" stroke="#333" stroke-width="0.35">26.264,16</text><text x="879.20" y="729.12" font-size="10.34" fill="#333" text-anchor="end" stroke="#333" stroke-width="0.35">0,00</text><text x="879.20" y="741.12" font-size="10.34" fill="#333" text-anchor="end" stroke="#333" stroke-width="0.35">0,00</text><text x="879.20" y="753.12" font-size="10.34" fill="#333" text-anchor="end" stroke="#333" stroke-width="0.35">0,00</text><text x="879.20" y="765.12" font-size="10.34" fill="#333" text-anchor="end" stroke="#333" stroke-width="0.35">0,00</text><text x="976.30" y="729.12" font-size="10.34" fill="#333" text-anchor="end" stroke="#333" stroke-width="0.35">0,00</text><text x="976.30" y="741.12" font-size="10.34" fill="#333" text-anchor="end" stroke="#333" stroke-width="0.35">0,00</text><text x="976.30" y="753.12" font-size="10.34" fill="#333" text-anchor="end" stroke="#333" stroke-width="0.35">0,00</text><text x="1074.40" y="729.12" font-size="10.34" fill="#333" text-anchor="end" stroke="#333" stroke-width="0.35">0,00</text><text x="1074.40" y="741.12" font-size="10.34" fill="#333" text-anchor="end" stroke="#333" stroke-width="0.35">0,00</text><text x="1074.40" y="753.12" font-size="10.34" fill="#333" text-anchor="end" stroke="#333" stroke-width="0.35">0,00</text><text x="137.00" y="783.26" font-size="10.1" fill="#333" text-anchor="middle" stroke="#333" stroke-width="0.35">25251/300</text><text x="180.20" y="783.26" font-size="10.38" fill="#333" stroke="#333" stroke-width="0.35">SPESE PER PROGETTAZIONI/LL.PP. - AA</text><text x="180.20" y="807.26" font-size="10.2" fill="#333" stroke="#333" stroke-width="0.35">Piano finanziario: U.2.02.03.05.001</text><text x="543.20" y="783.26" font-size="10.34" fill="#333" text-anchor="end" stroke="#333" stroke-width="0.35">350.000,00</text><text x="682.30" y="783.26" font-size="8.85" fill="#333" text-anchor="end" stroke="#333" stroke-width="0.35">previsione di competenza</text><text x="682.30" y="795.26" font-size="8.85" fill="#333" text-anchor="end" stroke="#333" stroke-width="0.35">di cui gi&#224; impegnato*</text><text x="682.30" y="807.26" font-size="8.85" fill="#333" text-anchor="end" stroke="#333" stroke-width="0.35">di cui fondo pluriennale vincolato</text><text x="682.30" y="819.26" font-size="8.85" fill="#333" text-anchor="end" stroke="#333" stroke-width="0.35">previsione di cassa</text><text x="780.70" y="783.26" font-size="10.34" fill="#333" text-anchor="end" stroke="#333" stroke-width="0.35">350.000,00</text><text x="780.70" y="807.26" font-size="10.34" fill="#333" text-anchor="end" stroke="#333" stroke-width="0.35">0,00</text><text x="780.70" y="819.26" font-size="10.34" fill="#333" text-anchor="end" stroke="#333" stroke-width="0.35">350.000,00</text><text x="879.20" y="783.26" font-size="10.34" fill="#333" text-anchor="end" stroke="#333" stroke-width="0.35">0,00</text><text x="879.20" y="795.26" font-size="10.34" fill="#333" text-anchor="end" stroke="#333" stroke-width="0.35">0,00</text><text x="879.20" y="807.26" font-size="10.34" fill="#333" text-anchor="end" stroke="#333" stroke-width="0.35">0,00</text><text x="879.20" y="819.26" font-size="10.34" fill="#333" text-anchor="end" stroke="#333" stroke-width="0.35">350.000,00</text><text x="976.30" y="783.26" font-size="10.34" fill="#333" text-anchor="end" stroke="#333" stroke-width="0.35">0,00</text><text x="976.30" y="795.26" font-size="10.34" fill="#333" text-anchor="end" stroke="#333" stroke-width="0.35">0,00</text><text x="976.30" y="807.26" font-size="10.34" fill="#333" text-anchor="end" stroke="#333" stroke-width="0.35">0,00</text><text x="1074.40" y="783.26" font-size="10.34" fill="#333" text-anchor="end" stroke="#333" stroke-width="0.35">0,00</text><text x="1074.40" y="795.26" font-size="10.34" fill="#333" text-anchor="end" stroke="#333" stroke-width="0.35">0,00</text><text x="1074.40" y="807.26" font-size="10.34" fill="#333" text-anchor="end" stroke="#333" stroke-width="0.35">0,00</text><text x="40.10" y="866.60" font-size="9.9" fill="#333" textLength="32" lengthAdjust="spacingAndGlyphs" stroke="#333" stroke-width="0.35">BI2125</text><text x="98.00" y="866.60" font-size="9.9" fill="#333" stroke="#333" stroke-width="0.35">Sipal</text><text x="1074.00" y="867.00" font-size="10.2" fill="#333" text-anchor="end" textLength="38" lengthAdjust="spacingAndGlyphs" stroke="#333" stroke-width="0.35">PAG. 20</text></svg>
<div class="r" style="left:93px;top:484.2px;width:1001px;height:79.6px;border:7px solid #e31e26;border-top-width:7.6px;box-sizing:border-box;"></div>
<div class="r" style="left:0px;top:883.5px;width:1115px;height:17px;background:#ffffff;"></div>
<svg class="r txt" style="left:0;top:0" width="1115" height="900" font-family="Liberation Sans" text-rendering="geometricPrecision"><text x="2.00" y="897.60" font-size="15.2" fill="#333" textLength="111" lengthAdjust="spacingAndGlyphs">Verbania Notizie</text></svg>
</body></html>
